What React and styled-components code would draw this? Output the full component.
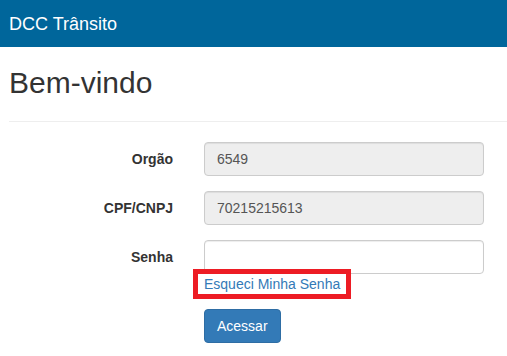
import React from "react";
import styled, { createGlobalStyle } from "styled-components";

const Global = createGlobalStyle`
  html, body { margin: 0; padding: 0; background: #fff; }
  body {
    font-family: "Liberation Sans", Arial, Helvetica, sans-serif;
    font-size: 14px;
    line-height: 20px;
    color: #333;
  }
  * { box-sizing: border-box; }
`;

const Navbar = styled.header`
  height: 47px;
  background: #00669b;
  padding-left: 9px;
  display: flex;
  align-items: center;
`;

const Brand = styled.span`
  color: #fff;
  font-size: 18px;
  line-height: 20px;
`;

const Container = styled.main`
  padding: 0 0 0 9px;
`;

const Title = styled.h2`
  margin: 19px 0 0;
  font-size: 30px;
  line-height: 33px;
  font-weight: 500;
  color: #333;
`;

const Rule = styled.hr`
  margin: 22px 0 20px;
  border: 0;
  border-top: 1px solid #eee;
  height: 0;
`;

const Form = styled.form`
  display: grid;
  grid-template-columns: 164px 280px;
  column-gap: 31px;
  row-gap: 15px;
  align-items: start;
`;

const Label = styled.label`
  text-align: right;
  font-weight: bold;
  font-size: 14px;
  line-height: 20px;
  padding-top: 7px;
  color: #333;
`;

const Field = styled.div`
  display: flex;
  flex-direction: column;
  align-items: flex-start;
`;

const Input = styled.input`
  width: 100%;
  height: 34px;
  padding: 6px 12px;
  font-family: "Liberation Sans", Arial, Helvetica, sans-serif;
  font-size: 14px;
  line-height: 20px;
  color: #555;
  background: ${(p) => (p.$locked ? "#eee" : "#fff")};
  border: 1px solid #ccc;
  border-radius: 4px;
  box-shadow: inset 0 1px 1px rgba(0, 0, 0, 0.075);
  outline: none;
`;

const ForgotLink = styled.a`
  position: relative;
  display: inline-block;
  color: #337ab7;
  text-decoration: none;
  font-size: 14px;
  line-height: 20px;
  &::after {
    content: "";
    position: absolute;
    top: -5px;
    bottom: -5px;
    left: -11px;
    right: -11px;
    border: 5px solid #ed1c24;
    pointer-events: none;
  }
`;

const Button = styled.button`
  margin-top: 15px;
  height: 34px;
  padding: 6px 12px;
  font-family: "Liberation Sans", Arial, Helvetica, sans-serif;
  font-size: 14px;
  line-height: 20px;
  color: #fff;
  background: #337ab7;
  border: 1px solid #2e6da4;
  border-radius: 4px;
  cursor: pointer;
`;

export default function App() {
  return (
    <>
      <Global />
      <Navbar>
        <Brand>DCC Trânsito</Brand>
      </Navbar>
      <Container>
        <Title>Bem-vindo</Title>
        <Rule />
        <Form onSubmit={(e) => e.preventDefault()}>
          <Label>Orgão</Label>
          <Field>
            <Input $locked readOnly value="6549" />
          </Field>
          <Label>CPF/CNPJ</Label>
          <Field>
            <Input $locked readOnly value="70215215613" />
          </Field>
          <Label>Senha</Label>
          <Field>
            <Input type="password" defaultValue="" />
            <ForgotLink href="#">Esqueci Minha Senha</ForgotLink>
            <Button type="submit">Acessar</Button>
          </Field>
        </Form>
      </Container>
    </>
  );
}
